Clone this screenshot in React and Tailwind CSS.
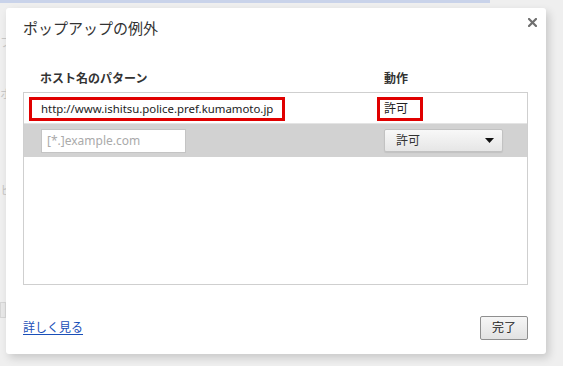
export default function App() {
  const font = {
    fontFamily: '"Noto Sans", "Noto Sans CJK JP", sans-serif',
  };

  return (
    <div
      className="relative w-[563px] h-[366px] overflow-hidden bg-[#efefef]"
      style={font}
    >
      {/* faded page behind the dialog */}
      <div className="absolute left-0 top-0 w-[490px] h-[3px] bg-[#c9d3ea]" />
      <div className="absolute left-0 top-[34px] text-[12px] text-[#c8c8c8]">フ</div>
      <div className="absolute left-0 top-[86px] text-[12px] text-[#c8c8c8]">ホ</div>
      <div className="absolute left-0 top-[182px] text-[12px] text-[#c8c8c8]">ヒ</div>
      <div className="absolute left-0 top-[302px] w-[6px] h-[16px] border border-[#d6d6d6] bg-[#e8e8e8]" />

      {/* dialog */}
      <div className="relative ml-[6px] mt-[8px] w-[540px] h-[346px] bg-white rounded-[3px] shadow-[3px_4px_8px_rgba(0,0,0,0.16)] flex flex-col pl-[17px] pr-[18px]">
        <button className="absolute right-[6px] top-[6px] w-[16px] h-[16px] flex items-center justify-center">
          <svg width="9" height="9" viewBox="0 0 9 9">
            <path d="M1 1 L8 8 M8 1 L1 8" stroke="#6f6f6f" strokeWidth="2.2" strokeLinecap="square" />
          </svg>
        </button>

        <h1 className="mt-[10px] h-[20px] leading-[20px] text-[15px] text-[#333] font-normal">
          ポップアップの例外
        </h1>

        <div className="mt-[33px] h-[16px] flex items-center text-[12px] font-bold text-[#333]">
          <div className="w-[361px] pl-[17px]">ホスト名のパターン</div>
          <div>動作</div>
        </div>

        <div className="mt-[5px] w-[505px] h-[193px] border border-[#cfcfcf] flex flex-col">
          <div className="h-[31px] flex items-start pt-[4px] border-b border-[#e4e4e4]">
            <div className="ml-[5px] w-[256px] h-[24px] border-[3px] border-[#e00000] flex items-center pl-[9px] text-[11.4px] text-[#222] whitespace-nowrap">
              http://www.ishitsu.police.pref.kumamoto.jp
            </div>
            <div className="ml-[92px] w-[46px] h-[24px] border-[3px] border-[#e00000] flex items-center pl-[4px] text-[12px] text-[#222]">
              許可
            </div>
          </div>
          <div className="h-[33px] bg-[#d2d2d2] flex items-center">
            <div className="ml-[17px] w-[145px] h-[24px] bg-white border border-[#c4c4c4] flex items-center pl-[5px] text-[12px] text-[#aaaaaa]">
              [*.]example.com
            </div>
            <div className="ml-[198px] w-[119px] h-[23px] rounded-[2px] border border-[#c2c2c2] bg-gradient-to-b from-[#f8f8f8] to-[#e6e6e6] shadow-[0_1px_1px_rgba(0,0,0,0.08)] flex items-center justify-between pl-[11px] pr-[8px] text-[12px] text-[#333]">
              <span>許可</span>
              <svg width="9" height="5" viewBox="0 0 9 5">
                <path d="M0 0 H9 L4.5 5 Z" fill="#111" />
              </svg>
            </div>
          </div>
          <div className="flex-1" />
        </div>

        <div className="mt-[31px] h-[24px] flex items-center justify-between">
          <a href="#" className="text-[12px] text-[#1a4fb8] underline underline-offset-2">
            詳しく見る
          </a>
          <button className="w-[48px] h-[24px] rounded-[2px] border border-[#8f8f8f] bg-gradient-to-b from-[#f6f6f6] to-[#e2e2e2] text-[12px] text-[#222]">
            完了
          </button>
        </div>
      </div>
    </div>
  );
}
